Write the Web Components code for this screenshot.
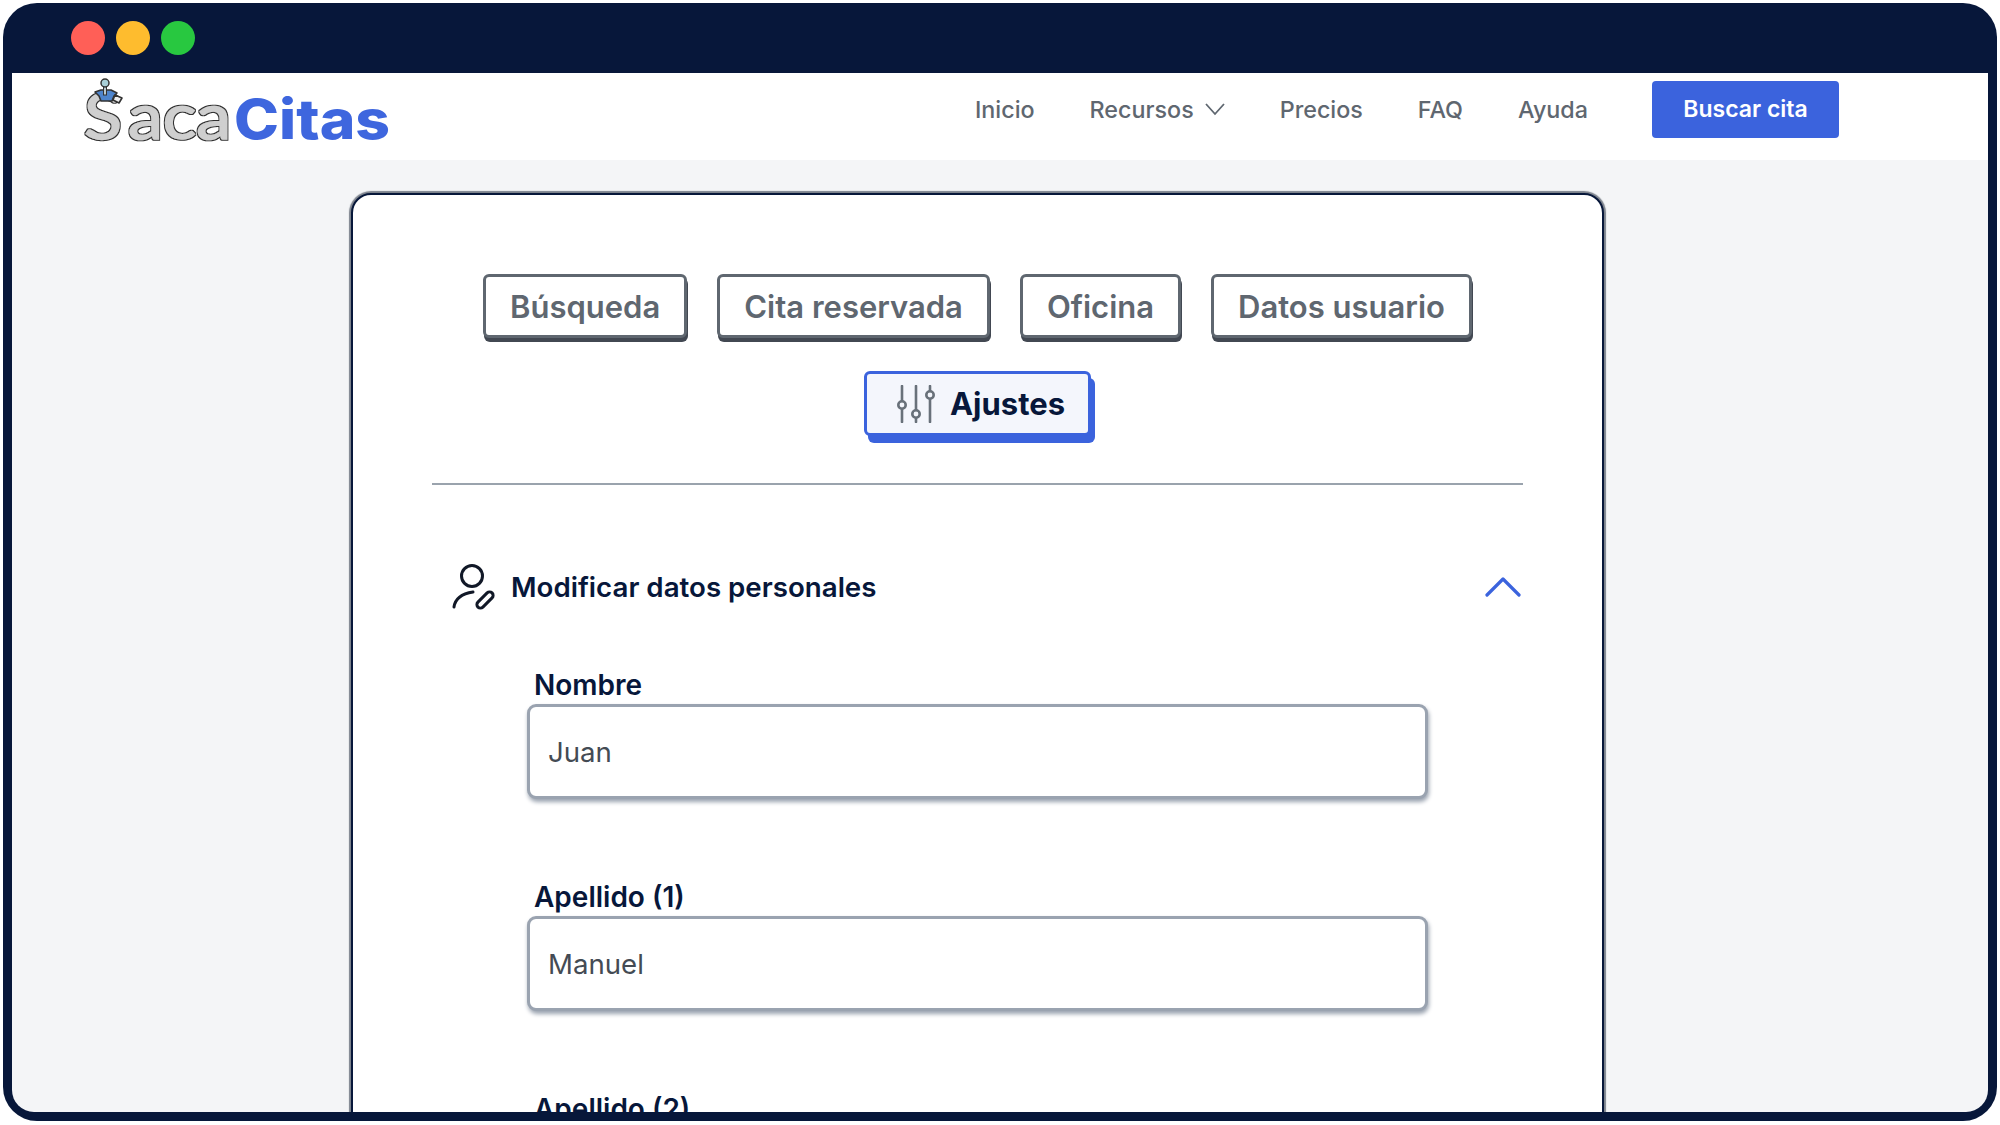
<!DOCTYPE html>
<html lang="es">
<head>
<meta charset="utf-8">
<title>SacaCitas</title>
<style>
    html, body { margin: 0; background: #fff; font-family: Inter, "Liberation Sans", sans-serif; }
</style>
</head>
<body>
<sc-window>
    <sc-header>
        <sc-nav-link>Inicio</sc-nav-link>
        <sc-nav-link caret>Recursos</sc-nav-link>
        <sc-nav-link>Precios</sc-nav-link>
        <sc-nav-link>FAQ</sc-nav-link>
        <sc-nav-link>Ayuda</sc-nav-link>
    </sc-header>
    <sc-card>
        <sc-tabs>
            <sc-tab>Búsqueda</sc-tab>
            <sc-tab>Cita reservada</sc-tab>
            <sc-tab>Oficina</sc-tab>
            <sc-tab>Datos usuario</sc-tab>
            <sc-tab active>Ajustes</sc-tab>
        </sc-tabs>
        <sc-section title="Modificar datos personales">
            <sc-field label="Nombre">Juan</sc-field>
            <sc-field label="Apellido (1)">Manuel</sc-field>
            <sc-field label="Apellido (2)"></sc-field>
        </sc-section>
    </sc-card>
</sc-window>

<script>
// small helper, every element here just sets its shadow markup once
class ScBase extends HTMLElement {
    constructor() {
        super();
        this.attachShadow({ mode: 'open' });
    }
    connectedCallback() {
        this.shadowRoot.innerHTML = this.render();
    }
}

class ScWindow extends ScBase {
    render() {
        return `
            <style>
                :host {
                    display: flex;
                    flex-direction: column;
                    box-sizing: border-box;
                    width: 1994px;
                    height: 1118px;
                    margin: 3px 0 0 3px;
                    padding: 0 9px 9px;
                    background: #07173a;
                    border-radius: 34px;
                }
                .bar { display: flex; gap: 11px; height: 70px; padding: 18px 0 0 59px; box-sizing: border-box; flex: none; }
                .dot { width: 34px; height: 34px; border-radius: 50%; }
                .view {
                    flex: 1;
                    min-height: 0;
                    overflow: hidden;
                    background: #f4f5f7;
                    border-radius: 0 0 22px 22px;
                }
            </style>
            <div class="bar">
                <div class="dot" style="background:#ff5f57"></div>
                <div class="dot" style="background:#febc2e"></div>
                <div class="dot" style="background:#28c840"></div>
            </div>
            <div class="view"><slot></slot></div>
        `;
    }
}

class ScLogo extends ScBase {
    render() {
        return `
            <style>
                :host { display: block; width: 325px; height: 80px; }
                svg { display: block; }
                .saca { font-family: Lato, Inter, sans-serif; font-weight: 400; font-size: 61px; fill: #cfcfcf; stroke: #cfcfcf; stroke-width: 1.500; }
                .citas { font-family: Inter, sans-serif; font-size: 55px; font-weight: 800; fill: #3e66de; }
            </style>
            <svg width="325" height="80" viewBox="0 0 325 80">
                <defs>
                    <filter id="tube" x="-5%" y="-10%" width="110%" height="120%">
                        <feMorphology in="SourceAlpha" operator="dilate" radius="1.300" result="grown"/>
                        <feFlood flood-color="#333"/>
                        <feComposite in2="grown" operator="in" result="edge"/>
                        <feMerge><feMergeNode in="edge"/><feMergeNode in="SourceGraphic"/></feMerge>
                    </filter>
                </defs>
                <g filter="url(#tube)">
                    <text class="saca" x="15" y="62" textLength="38" lengthAdjust="spacingAndGlyphs">S</text>
                    <text class="saca" x="59" y="62" textLength="103" lengthAdjust="spacingAndGlyphs">aca</text>
                </g>
                <text class="citas" x="165" y="62" textLength="156" lengthAdjust="spacingAndGlyphs">Citas</text>
                <path d="M26 15l6-2h10l6 3-3 3-2 5H32l-2-5z" fill="#4d84cc" stroke="#333" stroke-width="1.600" stroke-linejoin="round"/>
                <path d="M46 18l7 3-3 5-6-3z" fill="#eee" stroke="#333" stroke-width="1.600" stroke-linejoin="round"/>
                <rect x="34.500" y="9" width="3" height="9" fill="#b9c9cf" stroke="#333" stroke-width="1"/>
                <circle cx="36" cy="6" r="4" fill="#a9d0d8" stroke="#333" stroke-width="1.500"/>
            </svg>
        `;
    }
}

class ScHeader extends ScBase {
    render() {
        return `
            <style>
                :host {
                    display: flex;
                    align-items: flex-start;
                    box-sizing: border-box;
                    height: 87px;
                    padding: 8px 149px 0 57px;
                    background: #fff;
                }
                sc-logo { margin-top: -4px; }
                nav { display: flex; gap: 55px; margin-left: auto; margin-top: 14px; }
                .cta {
                    margin-left: 64px;
                    width: 187px;
                    height: 57px;
                    line-height: 56px;
                    text-align: center;
                    background: #3b63dd;
                    color: #fff;
                    border-radius: 4px;
                    font-size: 23px;
                    font-weight: 600;
                }
            </style>
            <sc-logo></sc-logo>
            <nav><slot></slot></nav>
            <div class="cta">Buscar cita</div>
        `;
    }
}

class ScNavLink extends ScBase {
    render() {
        const caret = this.hasAttribute('caret')
            ? `<svg width="20" height="14" viewBox="0 0 20 14"><path d="M1 2l9 10 9-10" fill="none" stroke="#5f6770" stroke-width="1.800"/></svg>`
            : '';
        return `
            <style>
                :host {
                    display: inline-flex;
                    align-items: center;
                    gap: 11px;
                    height: 28px;
                    font-size: 23.300px;
                    font-weight: 500;
                    color: #5f6770;
                }
            </style>
            <slot></slot>${caret}
        `;
    }
}

class ScCard extends ScBase {
    render() {
        return `
            <style>
                :host {
                    display: block;
                    box-sizing: border-box;
                    width: 1253px;
                    height: 1100px;
                    margin: 33px 0 0 339px;
                    padding: 79px 79px 0;
                    background: #fff;
                    border: 2px solid #07173a;
                    border-radius: 20px;
                    box-shadow: 0 0 1px 2px #7c828c;
                }
            </style>
            <slot></slot>
        `;
    }
}

class ScTabs extends ScBase {
    render() {
        return `
            <style>
                :host {
                    display: flex;
                    flex-wrap: wrap;
                    justify-content: center;
                    gap: 33px 30px;
                    padding-bottom: 47px;
                    border-bottom: 2px solid #9aa3ad;
                }
            </style>
            <slot></slot>
        `;
    }
}

class ScTab extends ScBase {
    render() {
        const icon = this.hasAttribute('active') ? `
            <svg width="38" height="38" viewBox="0 0 38 38" fill="none" stroke="#69717a" stroke-width="2.600" stroke-linecap="round">
                <path d="M5 1v15M5 24v13M19 1v24M19 33v4M33 1v5M33 14v23"/>
                <circle cx="5" cy="20" r="3.700"/><circle cx="19" cy="29" r="3.700"/><circle cx="33" cy="10" r="3.700"/>
            </svg>` : '';
        return `
            <style>
                :host {
                    display: inline-flex;
                    align-items: center;
                    gap: 15px;
                    box-sizing: border-box;
                    height: 64px;
                    padding: 0 24px;
                    font-size: 31px;
                    font-weight: 600;
                    color: #5f6770;
                    background: #fff;
                    border: 3px solid #5f6770;
                    border-radius: 6px;
                    box-shadow: 1px 4px 0 #424852;
                }
                :host([active]) {
                    height: 65px;
                    padding: 0 23px 0 30px;
                    font-weight: 700;
                    color: #07173a;
                    background: #f4f6fc;
                    border-color: #3b63dd;
                    box-shadow: 4px 7px 0 #3b63dd;
                }
            </style>
            ${icon}<slot></slot>
        `;
    }
}

class ScSection extends ScBase {
    render() {
        return `
            <style>
                :host { display: block; }
                .head {
                    display: flex;
                    align-items: center;
                    height: 46px;
                    margin: 79px 2px 0 20px;
                    font-size: 27.700px;
                    font-weight: 600;
                    color: #07173a;
                }
                .head span { margin-left: 16px; }
                .head svg:last-child { margin-left: auto; }
                .fields { padding: 58px 95px 0; }
            </style>
            <div class="head">
                <svg width="43" height="46" viewBox="0 0 43 46" fill="none" stroke="#111827" stroke-width="3" stroke-linecap="round">
                    <circle cx="20" cy="12" r="10.500"/>
                    <path d="M2 43c1-7 6-13 19-15"/>
                    <rect x="-3.500" y="-10" width="7" height="20" rx="3.500" transform="translate(33 36) rotate(45)"/>
                </svg>
                <span>${this.getAttribute('title')}</span>
                <svg width="36" height="20" viewBox="0 0 36 20" fill="none" stroke="#3b63dd" stroke-width="3.200" stroke-linecap="round" stroke-linejoin="round">
                    <path d="M2 18L18 2l16 16"/>
                </svg>
            </div>
            <div class="fields"><slot></slot></div>
        `;
    }
}

class ScField extends ScBase {
    render() {
        return `
            <style>
                :host { display: block; margin-bottom: 81px; }
                label {
                    display: block;
                    height: 34px;
                    line-height: 34px;
                    margin: 0 0 2px 7px;
                    font-size: 28px;
                    font-weight: 600;
                    color: #07173a;
                }
                .box {
                    box-sizing: border-box;
                    height: 95px;
                    padding: 0 18px;
                    display: flex;
                    align-items: center;
                    font-size: 27.600px;
                    color: #444b54;
                    background: #fff;
                    border: 3px solid #9aa3b0;
                    border-radius: 9px;
                    box-shadow: 1px 3px 4px #9aa3b0;
                }
            </style>
            <label>${this.getAttribute('label')}</label>
            <div class="box"><slot></slot></div>
        `;
    }
}

customElements.define('sc-window', ScWindow);
customElements.define('sc-logo', ScLogo);
customElements.define('sc-header', ScHeader);
customElements.define('sc-nav-link', ScNavLink);
customElements.define('sc-card', ScCard);
customElements.define('sc-tabs', ScTabs);
customElements.define('sc-tab', ScTab);
customElements.define('sc-section', ScSection);
customElements.define('sc-field', ScField);
</script>
</body>
</html>
